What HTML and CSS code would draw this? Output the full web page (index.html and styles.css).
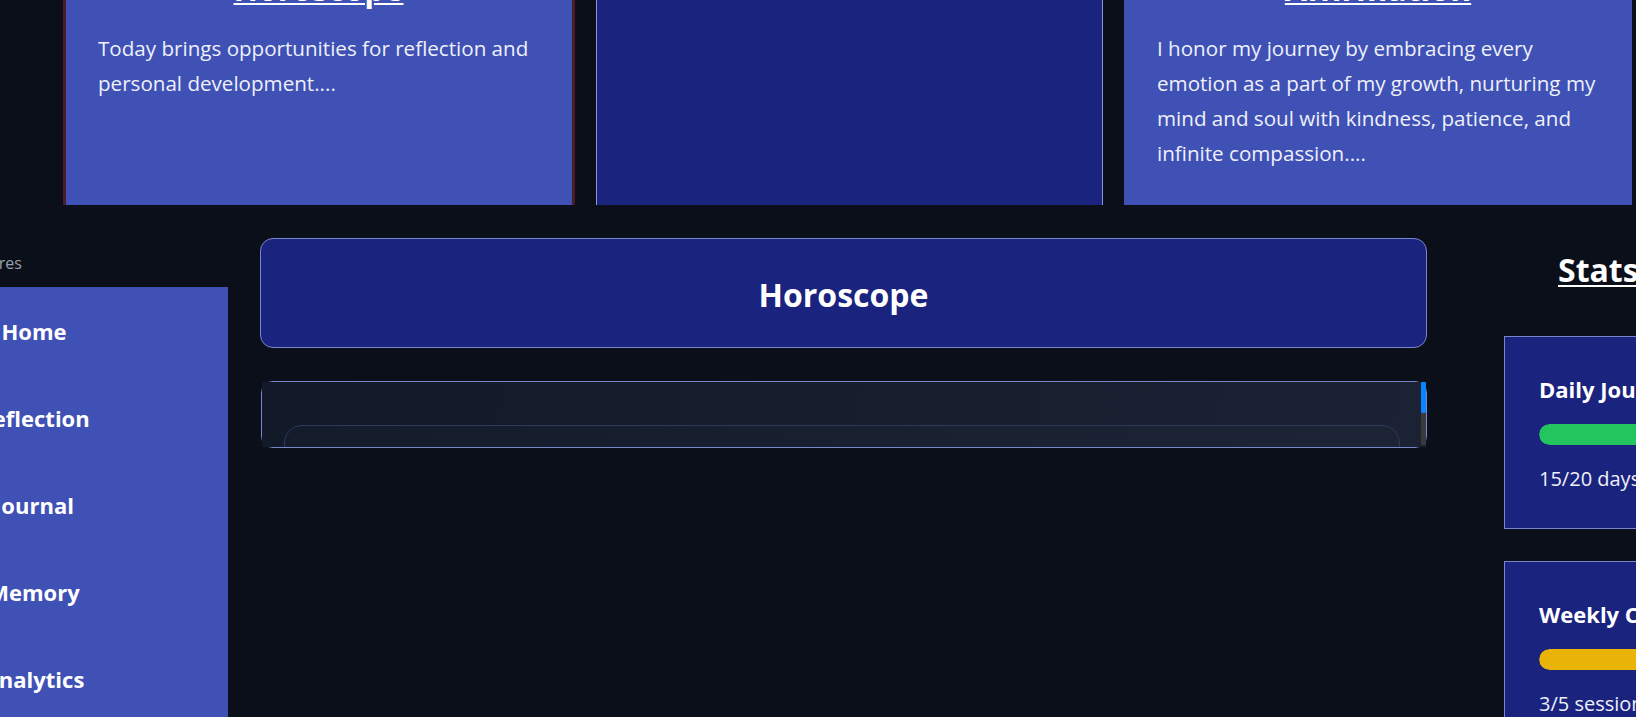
FILE: index.html
```html
<!DOCTYPE html>
<html lang="en">
<head>
<meta charset="utf-8">
<title>Horoscope</title>
<link rel="stylesheet" href="styles.css">
</head>
<body>
<div class="viewport">
  <section class="top-row">
    <article class="feature-card feature-card--accent">
      <h2 class="feature-title">Horoscope</h2>
      <p class="feature-text">Today brings opportunities for reflection and personal development....</p>
    </article>
    <article class="feature-card feature-card--dark"></article>
    <article class="feature-card">
      <h2 class="feature-title">Affirmation</h2>
      <p class="feature-text">I honor my journey by embracing every emotion as a part of my growth, nurturing my mind and soul with kindness, patience, and infinite compassion....</p>
    </article>
  </section>

  <section class="bottom">
    <aside class="sidebar">
      <div class="sidebar-label">Features</div>
      <nav class="sidebar-nav">
        <a class="nav-item">Home</a>
        <a class="nav-item">Reflection</a>
        <a class="nav-item">Journal</a>
        <a class="nav-item">Memory</a>
        <a class="nav-item">Analytics</a>
      </nav>
    </aside>

    <main class="main">
      <header class="page-header">Horoscope</header>
      <div class="scroll-frame">
        <div class="scroll">
          <div class="inner-card"></div>
        </div>
        <div class="scrollbar"><div class="scrollbar-thumb"></div></div>
      </div>
    </main>

    <aside class="stats">
      <h2 class="stats-title">Stats Overview</h2>
      <div class="stat-card">
        <h3 class="stat-name">Daily Journaling</h3>
        <div class="bar"><div class="bar-fill bar-fill--green" style="width:75%"></div></div>
        <p class="stat-value">15/20 days completed</p>
      </div>
      <div class="stat-card">
        <h3 class="stat-name">Weekly Check-ins</h3>
        <div class="bar"><div class="bar-fill bar-fill--yellow" style="width:60%"></div></div>
        <p class="stat-value">3/5 sessions completed</p>
      </div>
    </aside>
  </section>
</div>
</body>
</html>
```

FILE: styles.css
```css
* { box-sizing: border-box; }

html, body {
  margin: 0;
  padding: 0;
  background: #0b0f19;
}

body {
  font-family: "Open Sans", "Noto Sans", sans-serif;
  color: #ffffff;
}

.viewport {
  width: 1636px;
  height: 717px;
  overflow: hidden;
}

/* ---------- top row ---------- */
.top-row {
  display: grid;
  grid-template-columns: 512px 507px 508px;
  column-gap: 21px;
  margin-left: 63px;
  margin-top: -47px;
}

.feature-card {
  background: #3f51b5;
  padding: 16px 33px 34px 33px;
}

.feature-card--accent {
  border-left: 3px solid #4a1c26;
  border-right: 3px solid #4a1c26;
  padding-left: 32px;
}

.feature-card--dark {
  background: #1a237e;
  border-left: 1px solid #8a94d6;
  border-right: 1px solid #8a94d6;
}

.feature-title {
  margin: 0 0 22px 0;
  font-size: 32px;
  line-height: 40px;
  font-weight: 700;
  text-align: center;
  text-decoration: underline;
  text-decoration-thickness: 2px;
  text-underline-offset: 2px;
}

.feature-text {
  margin: 0;
  font-size: 20.6px;
  line-height: 35px;
  color: #eef0fa;
}

/* ---------- bottom ---------- */
.bottom {
  display: flex;
  align-items: flex-start;
  margin-left: -160px;
  margin-top: 33px;
}

.sidebar {
  width: 388px;
  flex: none;
  padding-top: 13px;
}

.sidebar-label {
  font-size: 16px;
  line-height: 24px;
  color: #9aa0ad;
  padding-left: 117px;
  margin-bottom: 12px;
}

.sidebar-nav {
  background: #3f51b5;
  height: 500px;
}

.nav-item {
  display: flex;
  align-items: center;
  justify-content: center;
  height: 87px;
  font-size: 22px;
  font-weight: 700;
  color: #ffffff;
}

.main {
  width: 1167px;
  flex: none;
  margin-left: 32px;
}

.page-header {
  height: 110px;
  display: flex;
  align-items: center;
  justify-content: center;
  padding-top: 2px;
  background: #1a237e;
  border: 1px solid #7986cb;
  border-radius: 13px;
  font-size: 32px;
  font-weight: 700;
}

.scroll-frame {
  position: relative;
  margin-top: 33px;
  margin-left: 1px;
  border: 1px solid #7986cb;
  border-radius: 12px;
}

.scroll {
  height: 63px;
  overflow: hidden;
  background: linear-gradient(100deg, #121a2a 0%, #1b2233 100%);
  padding: 43px 26px 22px 22px;
}

.scrollbar {
  position: absolute;
  top: 0;
  right: 0;
  width: 5px;
  height: 63px;
  background: #3a3a3c;
}

.scrollbar-thumb {
  height: 31px;
  background: #0a84ff;
  border-radius: 1px;
}

.inner-card {
  height: 70px;
  border: 1px solid #2d3a5e;
  border-radius: 18px;
  background: linear-gradient(100deg, #141c2c 0%, #1c2435 100%);
}

.stats {
  width: 380px;
  flex: none;
  margin-left: 77px;
}

.stats-title {
  margin: 12px 0 46px 0;
  padding-left: 54px;
  font-size: 32px;
  line-height: 40px;
  font-weight: 700;
  white-space: nowrap;
  text-decoration: underline;
  text-decoration-thickness: 2px;
  text-underline-offset: 3px;
}

.stat-card {
  background: #1a237e;
  border: 1px solid #7986cb;
  padding: 37px 34px 34px 34px;
  margin-bottom: 32px;
}

.stat-name {
  margin: 0 0 20px 0;
  font-size: 22px;
  line-height: 30px;
  font-weight: 700;
  white-space: nowrap;
}

.bar {
  height: 21px;
  border-radius: 11px;
  background: #2b3170;
  overflow: hidden;
}

.bar-fill {
  height: 100%;
  border-radius: 11px;
}

.bar-fill--green { background: #22c55e; }
.bar-fill--yellow { background: #eab308; }

.stat-value {
  margin: 19px 0 0 0;
  font-size: 20px;
  line-height: 30px;
  color: #eef0fa;
  white-space: nowrap;
}
```
